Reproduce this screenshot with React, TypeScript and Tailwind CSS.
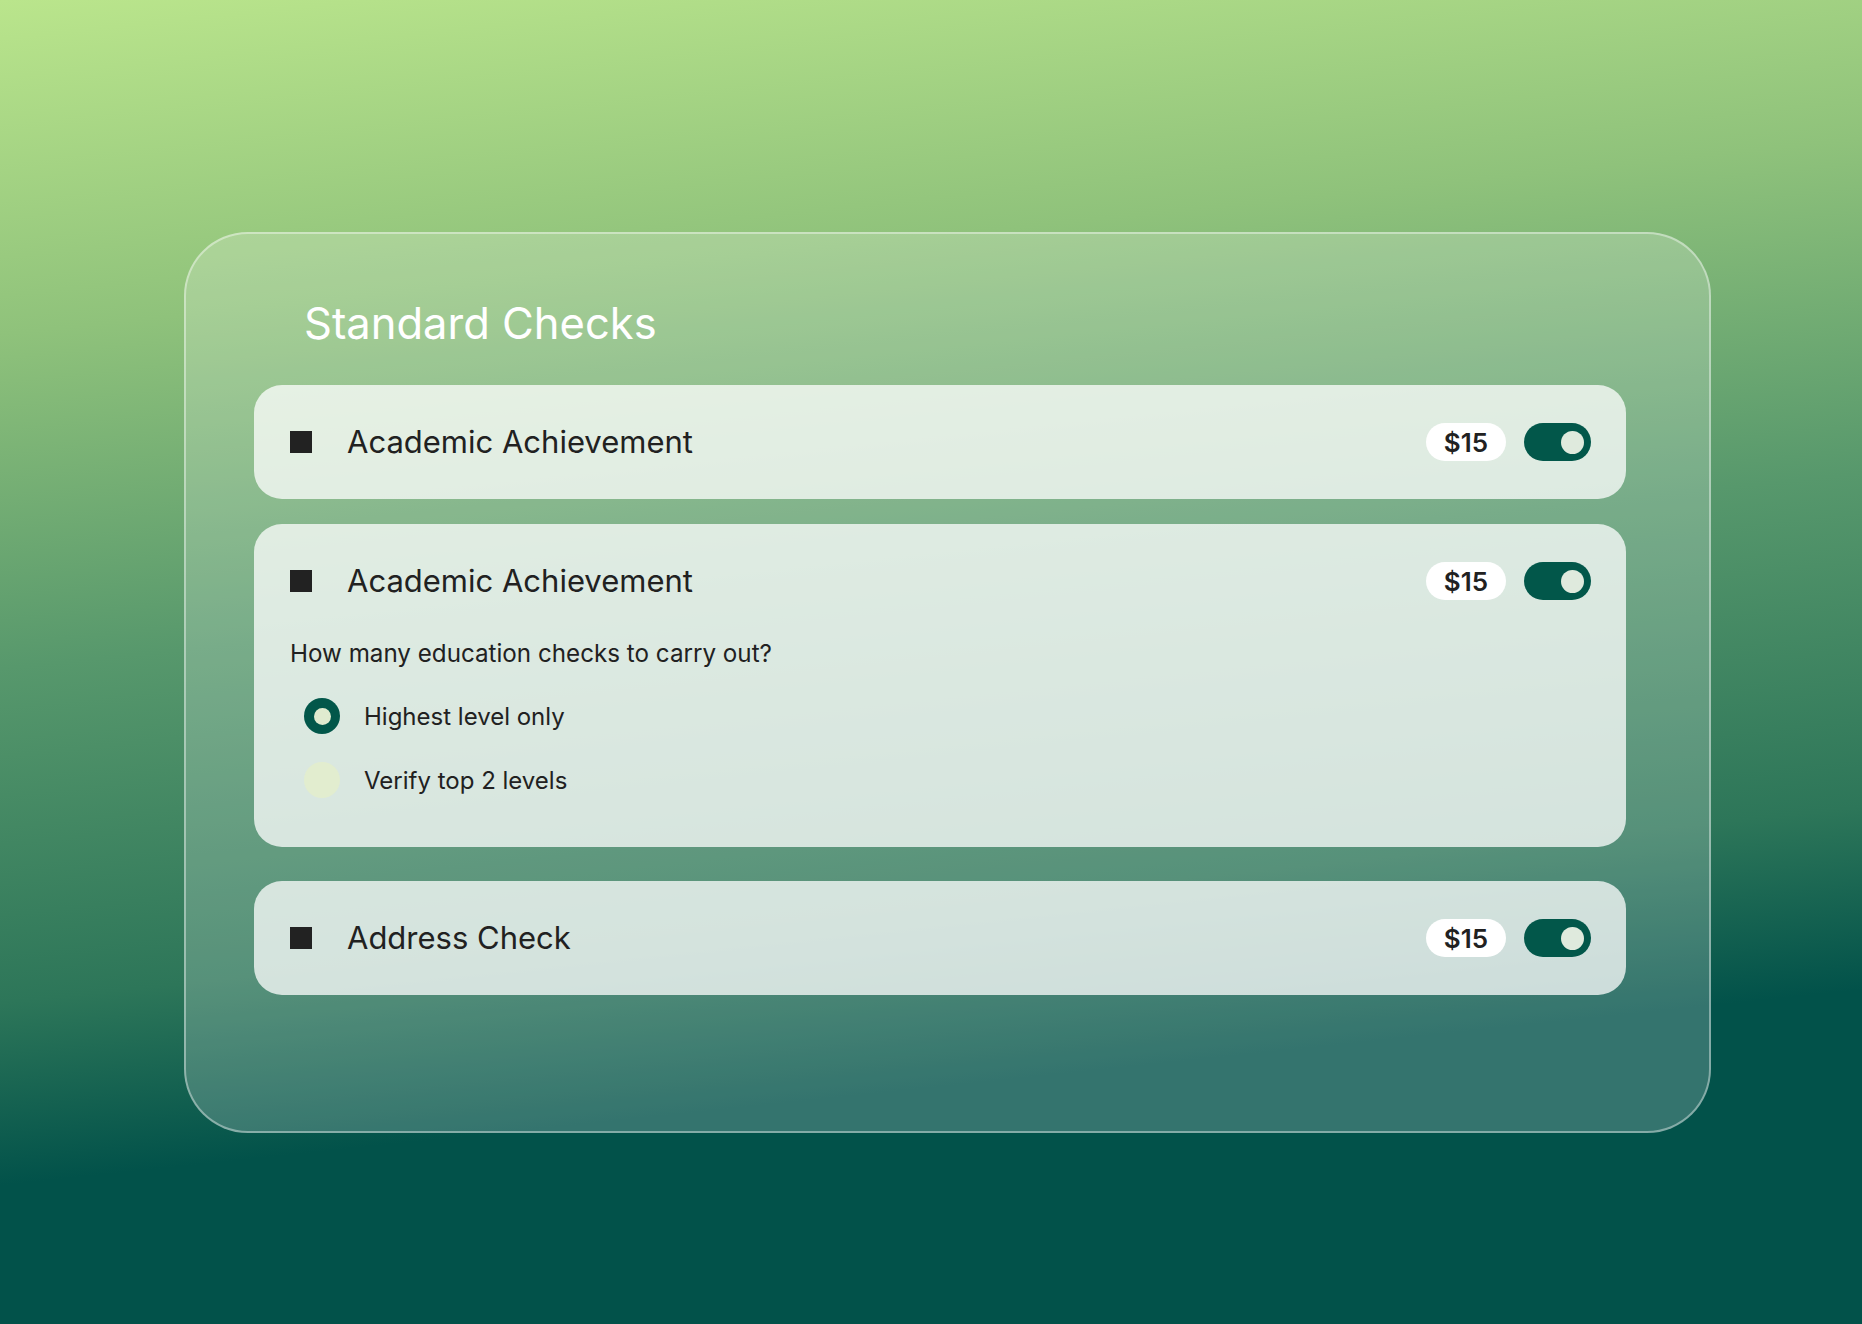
import React from "react";

type CheckRowProps = {
  label: string;
  price: string;
};

function PriceTag({ price }: { price: string }) {
  return (
    <div className="flex h-[38px] w-[80px] items-center justify-center rounded-full bg-white text-[26px] font-semibold text-[#212121]">
      {price}
    </div>
  );
}

function Toggle() {
  return (
    <div className="flex h-[38px] w-[67px] items-center justify-end rounded-full bg-[#02574a] pr-[7px]">
      <div className="h-[23px] w-[23px] rounded-full bg-[#dfeadd]" />
    </div>
  );
}

function RowHeader({ label, price }: CheckRowProps) {
  return (
    <div className="flex h-[114px] items-center pl-[36px] pr-[35px]">
      <div className="h-[22px] w-[22px] bg-[#222222]" />
      <span className="ml-[35px] text-[31px] text-[#212121]">{label}</span>
      <div className="ml-auto flex items-center gap-[18px]">
        <PriceTag price={price} />
        <Toggle />
      </div>
    </div>
  );
}

function Radio({ checked, label }: { checked: boolean; label: string }) {
  return (
    <div className="flex h-[36px] items-center pl-[14px]">
      {checked ? (
        <div className="flex h-[36px] w-[36px] items-center justify-center rounded-full bg-[#02574a]">
          <div className="h-[17px] w-[17px] rounded-full bg-[#e0ebcf]" />
        </div>
      ) : (
        <div className="h-[36px] w-[36px] rounded-full bg-[#e2edcf]" />
      )}
      <span className="ml-[24px] mt-[2px] text-[24px] text-[#212121]">{label}</span>
    </div>
  );
}

export default function App() {
  return (
    <div className="h-[1324px] w-full overflow-hidden bg-[linear-gradient(174deg,#bae58c_0%,#8fc27b_22%,#57986c_44%,#2d7659_66%,#02524a_78%,#02524a_100%)] pt-[232px] font-[Inter,sans-serif]">
      <div className="ml-[184px] h-[901px] w-[1527px] rounded-[64px] border-2 border-white/40 bg-white/20 pl-[68px] pr-[83px] pt-[63px]">
        <h1 className="ml-[50px] text-[43.5px] font-normal leading-[53px] text-white">
          Standard Checks
        </h1>

        <div className="mt-[35px] rounded-[28px] bg-white/75">
          <RowHeader label="Academic Achievement" price="$15" />
        </div>

        <div className="mt-[25px] rounded-[28px] bg-white/75 pb-[49px]">
          <RowHeader label="Academic Achievement" price="$15" />
          <p className="mt-[1px] pl-[36px] text-[24.2px] leading-[29px] text-[#212121]">
            How many education checks to carry out?
          </p>
          <div className="mt-[30px] flex flex-col gap-[28px] pl-[36px]">
            <Radio checked label="Highest level only" />
            <Radio checked={false} label="Verify top 2 levels" />
          </div>
        </div>

        <div className="mt-[34px] rounded-[28px] bg-white/75">
          <RowHeader label="Address Check" price="$15" />
        </div>
      </div>
    </div>
  );
}
